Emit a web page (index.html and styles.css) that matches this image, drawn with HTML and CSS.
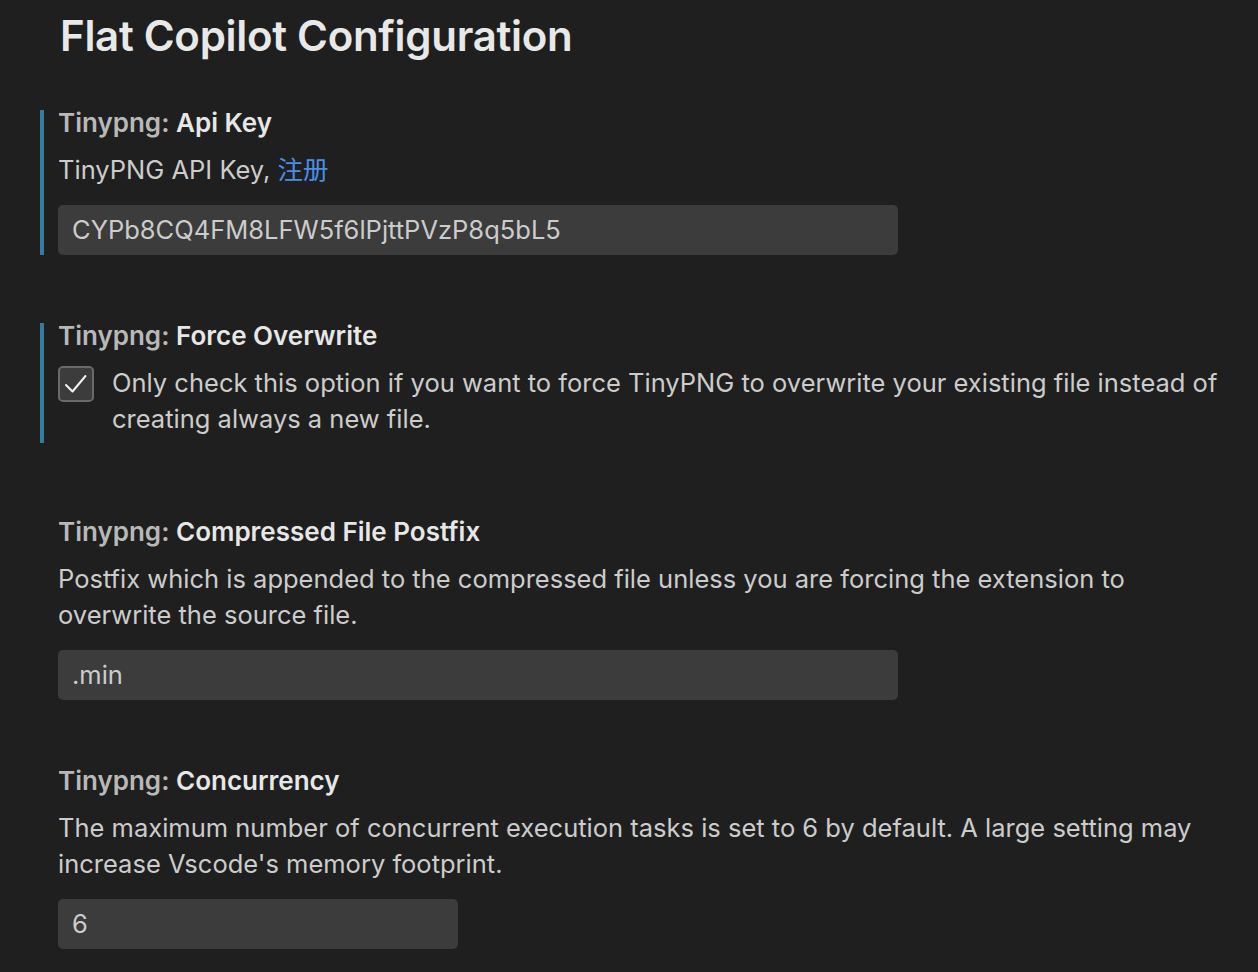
FILE: index.html
```html
<!DOCTYPE html>
<html lang="en">
<head>
<meta charset="utf-8">
<title>Flat Copilot Configuration</title>
<link rel="stylesheet" href="styles.css">
</head>
<body>
<main class="page">
  <h1 class="page-title">Flat Copilot Configuration</h1>

  <section class="setting is-modified">
    <div class="setting-title"><span class="category">Tinypng: </span><span class="label">Api Key</span></div>
    <div class="setting-desc">TinyPNG API Key, <a class="link" href="#">注册</a></div>
    <div class="input input-wide">CYPb8CQ4FM8LFW5f6lPjttPVzP8q5bL5</div>
  </section>

  <section class="setting is-modified setting-bool">
    <div class="setting-title"><span class="category">Tinypng: </span><span class="label">Force Overwrite</span></div>
    <div class="check-row">
      <span class="checkbox">
        <svg width="28" height="28" viewBox="0 0 28 28"><path d="M4 15 L10.5 21.5 L23.5 6" fill="none" stroke="#f2f2f2" stroke-width="2" stroke-linecap="round" stroke-linejoin="round"/></svg>
      </span>
      <span class="check-desc">Only check this option if you want to force TinyPNG to overwrite your existing file instead of creating always a new file.</span>
    </div>
  </section>

  <section class="setting">
    <div class="setting-title"><span class="category">Tinypng: </span><span class="label">Compressed File Postfix</span></div>
    <div class="setting-desc">Postfix which is appended to the compressed file unless you are forcing the extension to overwrite the source file.</div>
    <div class="input input-wide">.min</div>
  </section>

  <section class="setting">
    <div class="setting-title"><span class="category">Tinypng: </span><span class="label">Concurrency</span></div>
    <div class="setting-desc">The maximum number of concurrent execution tasks is set to 6 by default. A large setting may increase Vscode's memory footprint.</div>
    <div class="input input-narrow">6</div>
  </section>
</main>
</body>
</html>
```

FILE: styles.css
```css
html, body {
  margin: 0;
  padding: 0;
  background: #1f1f1f;
}

body {
  font-family: Inter, "Noto Sans", "Noto Sans CJK SC", sans-serif;
  color: #cccccc;
  height: 972px;
  overflow: hidden;
}

.page {
  display: flex;
  flex-direction: column;
  padding: 0 28px 0 40px;
}

.page-title {
  margin: 0;
  padding: 10px 0 0 20px;
  font-size: 42px;
  line-height: 52px;
  font-weight: 600;
  color: #e8e8e8;
  letter-spacing: -0.3px;
}

.setting {
  display: flex;
  flex-direction: column;
  border-left: 4px solid transparent;
  padding-left: 14px;
  margin-top: 68px;
}

.page-title + .setting {
  margin-top: 48px;
}

.setting.is-modified {
  border-left-color: #347ca0;
}

.setting-bool {
  padding-bottom: 6px;
}

.setting-bool + .setting {
  margin-top: 76px;
}

.setting-title {
  font-size: 26px;
  line-height: 26px;
  font-weight: 600;
}

.category {
  color: #b8b8b8;
}

.label {
  color: #e7e7e7;
}

.setting-desc {
  margin-top: 16px;
  font-size: 25.5px;
  line-height: 36px;
  color: #cccccc;
}

.link {
  color: #4a8fe6;
  text-decoration: none;
}

.input {
  margin-top: 17px;
  height: 50px;
  box-sizing: border-box;
  background: #3c3c3c;
  border-radius: 5px;
  padding-left: 14px;
  font-size: 25.5px;
  line-height: 50px;
  color: #cccccc;
}

.input-wide {
  width: 840px;
}

.input-narrow {
  width: 400px;
}

.check-row {
  margin-top: 16px;
  display: flex;
  align-items: flex-start;
  gap: 18px;
}

.checkbox {
  flex: none;
  width: 36px;
  height: 36px;
  margin-top: 1px;
  box-sizing: border-box;
  border: 2px solid #6a6a6a;
  border-radius: 5px;
  background: #3c3c3c;
  display: flex;
  align-items: center;
  justify-content: center;
}

.check-desc {
  font-size: 25.5px;
  line-height: 36px;
  color: #cccccc;
}
```
